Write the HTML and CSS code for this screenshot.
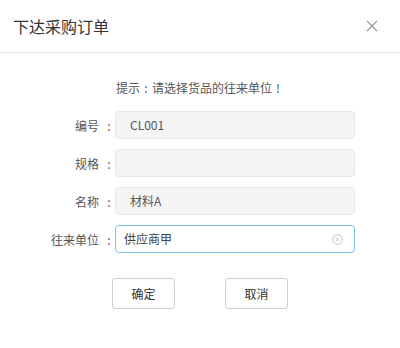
FILE: index.html
```html
<!DOCTYPE html>
<html lang="zh-CN">
<head>
<meta charset="utf-8">
<link rel="stylesheet" href="styles.css">
</head>
<body>
<div class="dialog">
  <div class="header">
    <span class="title">下达采购订单</span>
    <svg class="close" width="12" height="12" viewBox="0 0 12 12"><path d="M1 1L11 11M11 1L1 11" stroke="#9a9a9a" stroke-width="1.2" fill="none"/></svg>
  </div>
  <div class="body">
    <div class="hint">提示<span class="punct">:</span>请选择货品的往来单位<span class="punct">!</span></div>
    <div class="row">
      <label class="label">编号<span class="colon">:</span></label>
      <div class="input readonly">CL001</div>
    </div>
    <div class="row">
      <label class="label">规格<span class="colon">:</span></label>
      <div class="input readonly"></div>
    </div>
    <div class="row">
      <label class="label">名称<span class="colon">:</span></label>
      <div class="input readonly">材料A</div>
    </div>
    <div class="row">
      <label class="label">往来单位<span class="colon">:</span></label>
      <div class="input active">供应商甲
        <svg class="clear" width="11" height="11" viewBox="0 0 11 11"><circle cx="5.5" cy="5.5" r="4.8" stroke="#c0c4cc" stroke-width="1" fill="none"/><path d="M3.8 3.8L7.2 7.2M7.2 3.8L3.8 7.2" stroke="#c0c4cc" stroke-width="1"/></svg>
      </div>
    </div>
    <div class="buttons">
      <button class="btn">确定</button>
      <button class="btn">取消</button>
    </div>
  </div>
</div>
</body>
</html>
```
FILE: styles.css
```css
* { box-sizing: border-box; }
html, body { margin: 0; padding: 0; background: #fff; }
body {
  font-family: "Noto Sans CJK SC", "Noto Sans", sans-serif;
  color: #606266;
}
.dialog {
  width: 400px;
  height: 348px;
  background: #fff;
  border-radius: 2px;
}
.header {
  height: 53px;
  padding: 0 22px 0 13px;
  display: flex;
  align-items: center;
  justify-content: space-between;
  border-bottom: 1px solid #e5e5e5;
}
.title {
  font-size: 16px;
  color: #333;
  line-height: 20px;
}
.close { display: block; }
.body {
  padding-top: 25px;
}
.hint {
  text-align: center;
  font-size: 12px;
  line-height: 20px;
  color: #555;
  margin-bottom: 13px;
}
.punct, .colon {
  display: inline-block;
  width: 12px;
  text-align: center;
}
.colon {
  margin-left: 4px;
}
.row {
  display: flex;
  align-items: center;
  margin-bottom: 10px;
}
.label {
  width: 115px;
  text-align: right;
  font-size: 12px;
  color: #555;
}
.input {
  position: relative;
  width: 240px;
  height: 28px;
  border: 1px solid #e4e7ed;
  border-radius: 4px;
  font-size: 12px;
  line-height: 26px;
  color: #555;
}
.readonly {
  background: #f5f5f6;
  padding-left: 14px;
}
.active {
  background: #fff;
  border-color: #7cc2f2;
  padding-left: 8px;
  color: #444;
}
.clear {
  position: absolute;
  right: 11px;
  top: 8px;
}
.buttons {
  display: flex;
  justify-content: center;
  gap: 50px;
  margin-top: 25px;
}
.btn {
  width: 63px;
  height: 31px;
  background: #fff;
  border: 1px solid #cfcfcf;
  border-radius: 3px;
  font-family: "Noto Sans CJK SC", sans-serif;
  font-size: 12px;
  color: #333;
  padding: 0;
}
```
